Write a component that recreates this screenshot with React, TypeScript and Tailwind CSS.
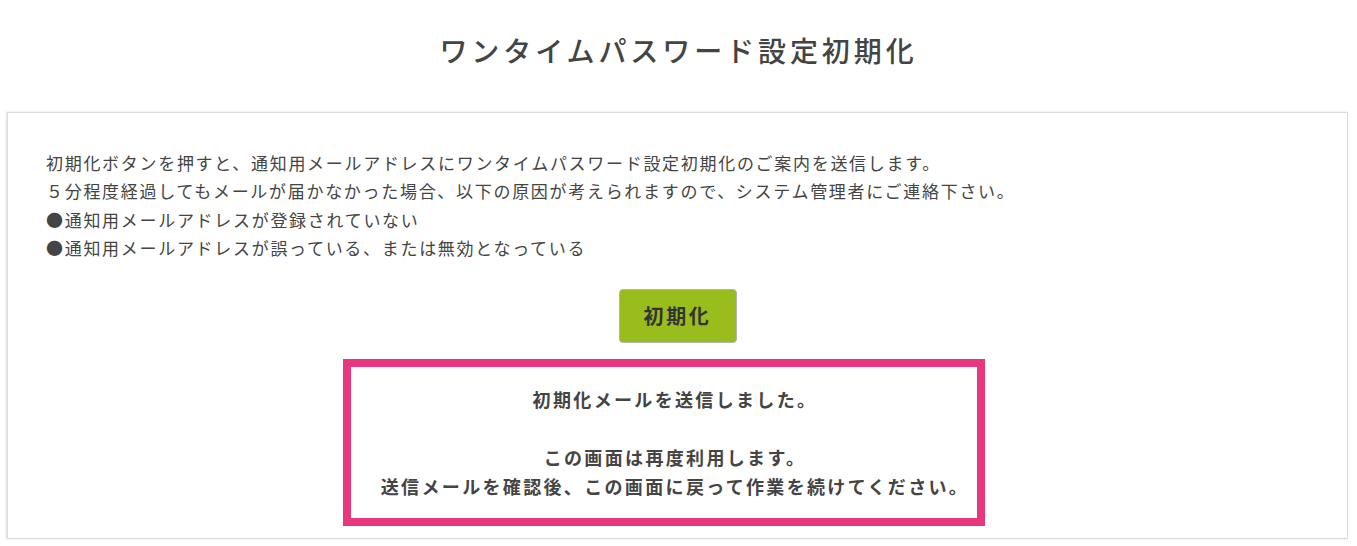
const font = { fontFamily: '"Noto Sans CJK JP", "Noto Sans", sans-serif' };

const notes = [
  "初期化ボタンを押すと、通知用メールアドレスにワンタイムパスワード設定初期化のご案内を送信します。",
  "５分程度経過してもメールが届かなかった場合、以下の原因が考えられますので、システム管理者にご連絡下さい。",
  "●通知用メールアドレスが登録されていない",
  "●通知用メールアドレスが誤っている、または無効となっている",
];

export default function App() {
  return (
    <div className="min-h-[546px] bg-white text-[#444]" style={font}>
      <h1 className="pt-[30px] pb-[42px] text-center text-[28px] leading-[40px] font-medium tracking-[0.14em] text-[#444]">
        ワンタイムパスワード設定初期化
      </h1>

      <div className="ml-[7px] mr-[9px] border border-[#dcdcdc] bg-white px-[38px] pt-[36px] pb-[12px] shadow-[-1px_0_2px_rgba(0,0,0,0.12)]">
        {/* description */}
        <div className="text-[17px] leading-[28.4px] tracking-[0.1em] text-[#444]">
          {notes.map((line, i) => (
            <p key={i}>{line}</p>
          ))}
        </div>

        <div className="mt-[26px] flex justify-center">
          <button className="h-[54px] w-[118px] rounded-[4px] border border-[#b5b5b5] bg-[#9abd1e] text-[20px] font-bold tracking-[0.13em] text-[#333]">
            初期化
          </button>
        </div>

        {/* result message */}
        <div className="mt-[16px] flex justify-center pr-[27px]">
          <div className="w-[642px] border-[8px] border-[#e8367f] pt-[18px] pr-0 pb-[17px] pl-[22px] text-center text-[18px] leading-[29px] font-bold tracking-[0.13em] text-[#444]">
            <p>初期化メールを送信しました。</p>
            <p>&nbsp;</p>
            <p>この画面は再度利用します。</p>
            <p>送信メールを確認後、この画面に戻って作業を続けてください。</p>
          </div>
        </div>
      </div>
    </div>
  );
}
